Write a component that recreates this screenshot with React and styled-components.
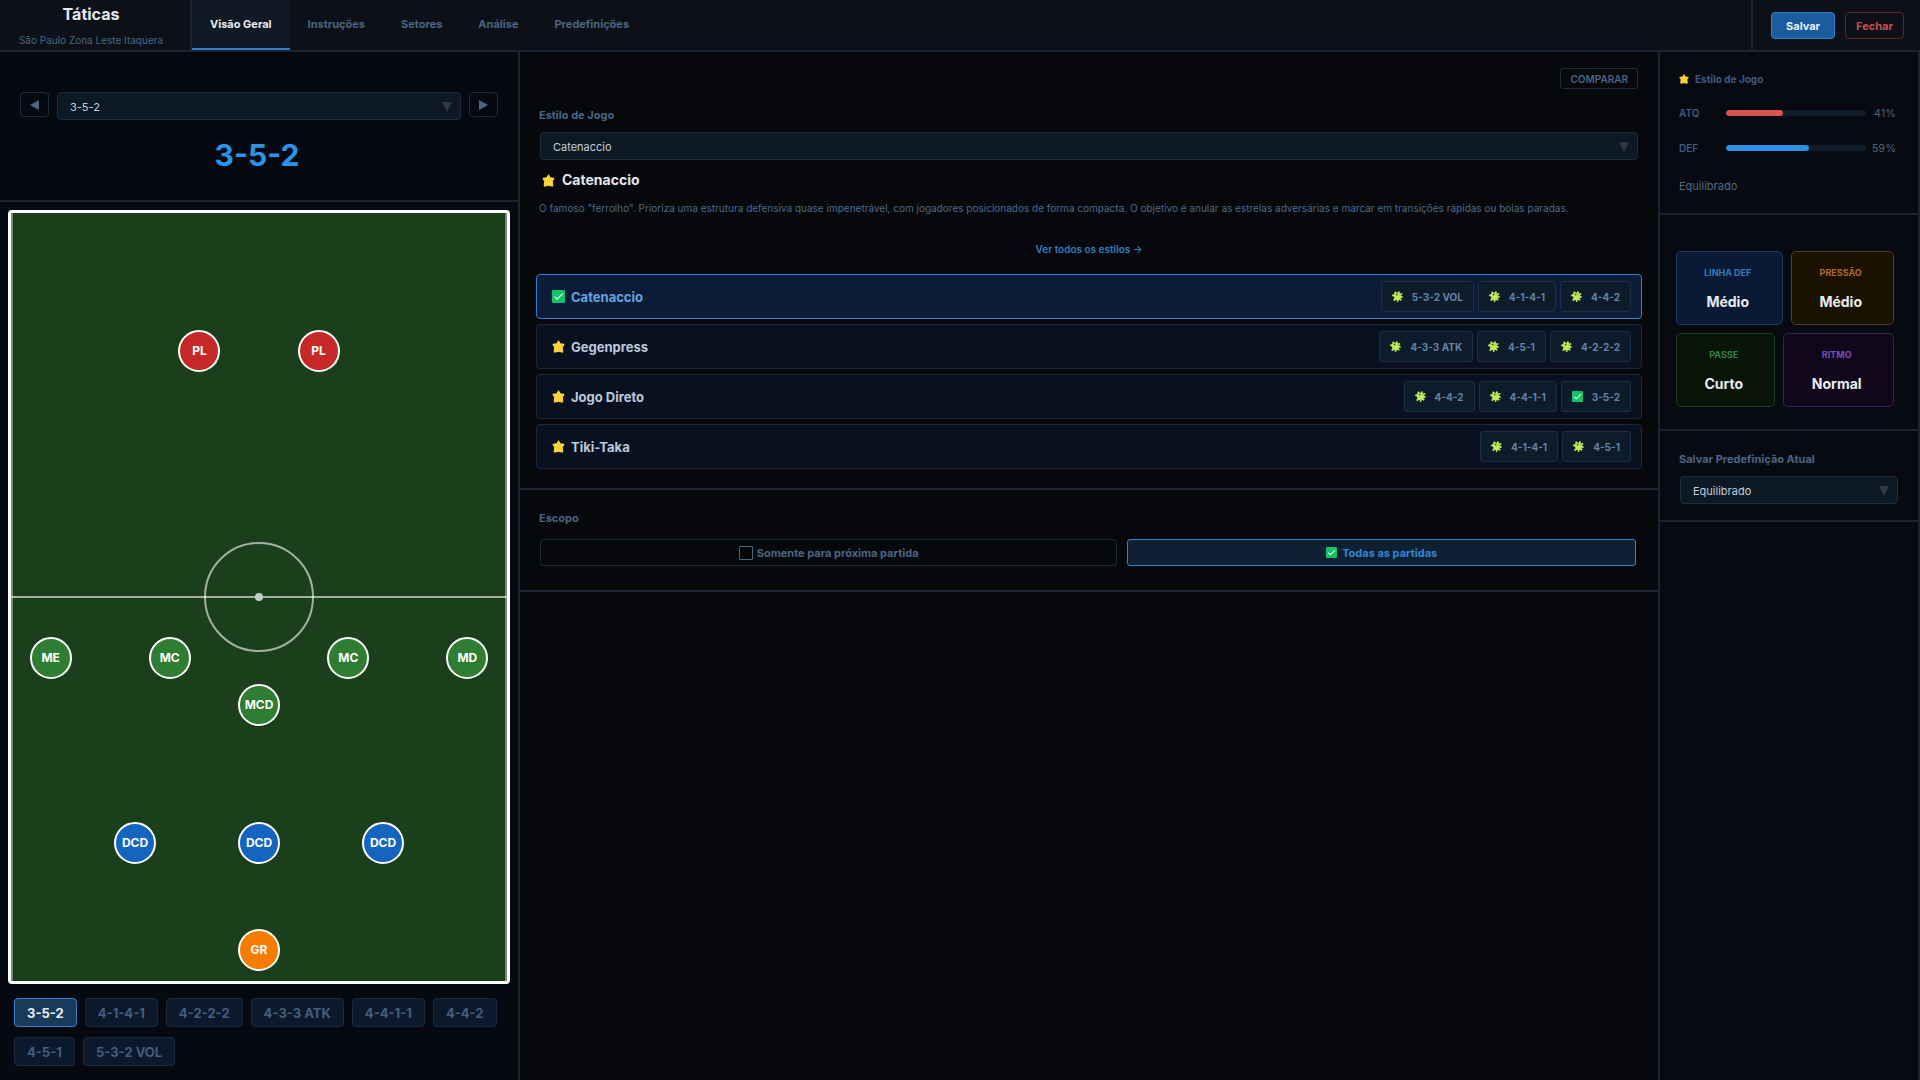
import React, { useState } from "react";
import styled, { createGlobalStyle, css } from "styled-components";

const GlobalStyle = createGlobalStyle`
  *, *::before, *::after { box-sizing: border-box; }
  body {
    margin: 0;
    background: #06080b;
    color: #e2e8f0;
    font-family: Inter, "Liberation Sans", sans-serif;
    font-size: 11px;
    line-height: 16px;
  }
  button, select { font-family: inherit; margin: 0; }
  button { cursor: pointer; }
  h1, h2, h3, p { margin: 0; }
`;

const line = "#1c2331";
const muted = "#4a6585";

const Page = styled.div`
  min-height: 100vh;
  display: flex;
  flex-direction: column;
`;

const Header = styled.header`
  display: flex;
  align-items: stretch;
  height: 52px;
  background: #0d1117;
  border-bottom: 2px solid ${line};
`;

const Brand = styled.div`
  width: 192px;
  padding: 4px 8px 0 0;
  border-right: 2px solid ${line};
  display: flex;
  flex-direction: column;
  gap: 8px;
  text-align: center;
`;

const BrandTitle = styled.h1`
  font-size: 16px;
  line-height: 20px;
  font-weight: 700;
`;

const BrandTeam = styled.p`
  font-size: 10px;
  line-height: 16px;
  color: ${muted};
`;

const Tabs = styled.nav`
  display: flex;
  flex: 1;
`;

const Tab = styled.button`
  padding: 0 18px;
  border: 0;
  border-bottom: 2px solid ${(p) => (p.$active ? "#3182ce" : "transparent")};
  background: ${(p) => (p.$active ? "#0f1923" : "transparent")};
  color: ${(p) => (p.$active ? "#e8edf4" : muted)};
  font-size: 11px;
  font-weight: 700;
`;

const Actions = styled.div`
  display: flex;
  align-items: center;
  gap: 10px;
  padding: 1px 16px 0 18px;
  border-left: 2px solid ${line};
`;

const ActionButton = styled.button`
  height: 27px;
  padding: 0 ${(p) => (p.$primary ? 14 : 10)}px;
  border-radius: 4px;
  border: 1px solid ${(p) => (p.$primary ? "#3182ce" : "#5a2529")};
  background: ${(p) => (p.$primary ? "#1a5c9e" : "transparent")};
  color: ${(p) => (p.$primary ? "#e8f1fa" : "#c84f50")};
  font-size: 11px;
  font-weight: 700;
`;

const Body = styled.div`
  flex: 1;
  display: grid;
  grid-template-columns: 520px minmax(0, 1fr) 262px;
`;

const FormationPanel = styled.aside`
  display: flex;
  flex-direction: column;
  background: #060a10;
  border-right: 2px solid ${line};
`;

const FormationHead = styled.section`
  padding: 40px 20px 25px;
  border-bottom: 2px solid ${line};
`;

const Picker = styled.div`
  display: flex;
  align-items: flex-start;
  gap: 8px;
`;

const StepButton = styled.button`
  width: 29px;
  height: 25px;
  padding: 0;
  display: grid;
  place-items: center;
  border: 1px solid #1e2d3d;
  border-radius: 4px;
  background: transparent;
  color: #4a6787;
`;

const FormationName = styled.h2`
  margin-top: 15px;
  padding-right: 4px;
  text-align: center;
  color: #2b93e8;
  font-size: 30px;
  line-height: 40px;
  font-weight: 700;
`;

const SelectBox = styled.div`
  position: relative;
  flex: 1;
  display: flex;
`;

const SelectInput = styled.select`
  flex: 1;
  height: 28px;
  padding: 1px 30px 0 12px;
  appearance: none;
  border: 1px solid #1e2d3d;
  border-radius: 4px;
  background: #0d1825;
  color: #c3cfdf;
  font-size: 11px;
`;

const SelectArrow = styled.svg`
  position: absolute;
  right: 9px;
  top: 50%;
  margin-top: -4px;
  pointer-events: none;
`;

const Pitch = styled.div`
  position: relative;
  flex: 1;
  min-height: 480px;
  margin: 8px 8px 14px;
  border: 3px solid #fff;
  border-radius: 4px;
  background: #1b3e1b;
  overflow: hidden;
`;

const Touchlines = styled.div`
  position: absolute;
  inset: 0;
  border: solid rgba(255, 255, 255, 0.4);
  border-width: 0 2px;
`;

const HalfwayLine = styled.div`
  position: absolute;
  left: 0;
  right: 0;
  top: 50%;
  height: 2px;
  margin-top: -1px;
  background: rgba(255, 255, 255, 0.6);
`;

const CentreCircle = styled.div`
  position: absolute;
  left: 50%;
  top: 50%;
  width: 110px;
  height: 110px;
  margin: -55px 0 0 -55px;
  border: 2px solid rgba(255, 255, 255, 0.6);
  border-radius: 50%;
`;

const CentreSpot = styled.div`
  position: absolute;
  left: 50%;
  top: 50%;
  width: 8px;
  height: 8px;
  margin: -4px 0 0 -4px;
  border-radius: 50%;
  background: #c3cdc3;
`;

const lineColours = {
  attack: "#c62828",
  midfield: "#2e7d32",
  defence: "#1565c0",
  keeper: "#f57c00",
};

const Player = styled.div`
  position: absolute;
  left: ${(p) => p.$x}%;
  top: ${(p) => p.$y}%;
  width: 42px;
  height: 42px;
  margin: -21px 0 0 -21px;
  display: grid;
  place-items: center;
  border: 2px solid #fff;
  border-radius: 50%;
  background: ${(p) => lineColours[p.$line]};
  color: #fff;
  font-size: 12px;
  font-weight: 700;
`;

const FormationList = styled.div`
  display: flex;
  flex-wrap: wrap;
  gap: 10px 8px;
  padding: 0 14px 14px;
`;

const FormationButton = styled.button`
  height: 29px;
  padding: 0 12px;
  border-radius: 4px;
  border: 1px solid ${(p) => (p.$active ? "#3182ce" : "#1a2a3e")};
  background: ${(p) => (p.$active ? "#1a3a5c" : "#0c192c")};
  color: ${(p) => (p.$active ? "#e8edf4" : "#435e7e")};
  font-size: 13px;
  font-weight: 700;
`;

const Main = styled.main`
  min-width: 0;
`;

const StyleSection = styled.section`
  padding: 16px 16px 19px;
  border-bottom: 2px solid ${line};
`;

const CompareRow = styled.div`
  display: flex;
  justify-content: flex-end;
  padding-right: 4px;
`;

const CompareButton = styled.button`
  height: 21px;
  padding: 0 9px;
  border: 1px solid #1e2d3d;
  border-radius: 3px;
  background: transparent;
  color: ${muted};
  font-size: 10px;
  font-weight: 600;
`;

const FieldLabel = styled.label`
  display: block;
  padding-left: 3px;
  color: ${muted};
  font-size: 11px;
  line-height: 16px;
  font-weight: 700;
`;

const StyleField = styled.div`
  margin-top: 18px;
  display: grid;
  gap: 9px;
`;

const StyleSelectWrap = styled.div`
  display: flex;
  padding: 0 4px;
`;

const StyleTitle = styled.h2`
  display: flex;
  align-items: center;
  gap: 7px;
  margin-top: 10px;
  padding-left: 6px;
  font-size: 14px;
  line-height: 20px;
  font-weight: 700;
`;

const Description = styled.p`
  margin-top: 10px;
  padding: 0 3px;
  color: #4d6a8b;
  font-size: 10px;
  line-height: 16px;
  font-weight: 400;
`;

const AllStyles = styled.a`
  display: block;
  width: fit-content;
  margin: 25px auto 17px;
  color: #2f7fc4;
  font-size: 10px;
  line-height: 16px;
  font-weight: 600;
  text-decoration: none;
`;

const StyleList = styled.ul`
  display: grid;
  gap: 5px;
  margin: 0;
  padding: 0;
  list-style: none;
`;

const StyleRow = styled.li`
  display: flex;
  align-items: center;
  justify-content: space-between;
  height: 45px;
  padding: 0 10px 0 15px;
  border-radius: 4px;
  border: 1px solid #1c2838;
  background: #091120;
  color: #bccadc;
  ${(p) =>
    p.$active &&
    css`
      border-color: #3182ce;
      background: #0c1c38;
      color: #64a5e0;
    `}
`;

const StyleName = styled.h3`
  display: flex;
  align-items: center;
  gap: 6px;
  font-size: 13px;
  font-weight: 700;
`;

const TagList = styled.div`
  display: flex;
  gap: 4px;
`;

const Tag = styled.button`
  display: flex;
  align-items: center;
  gap: 9px;
  height: 31px;
  padding: 0 10px;
  border: 1px solid #1a2f45;
  border-radius: 3px;
  background: #0d1b2a;
  color: #6284a8;
  font-size: 10px;
  font-weight: 700;
`;

const ScopeSection = styled.section`
  padding: 20px 16px 24px;
  border-bottom: 2px solid ${line};
`;

const ScopeOptions = styled.div`
  display: flex;
  gap: 10px;
  margin-top: 13px;
  padding: 0 6px 0 4px;
`;

const ScopeButton = styled.button`
  flex: 1 1 auto;
  display: flex;
  align-items: center;
  justify-content: center;
  gap: ${(p) => (p.$active ? 5 : 4)}px;
  height: 27px;
  border-radius: 3px;
  border: 1px solid ${(p) => (p.$active ? "#3182ce" : "#1e2836")};
  background: ${(p) => (p.$active ? "#0f2033" : "transparent")};
  color: ${(p) => (p.$active ? "#2f87d3" : muted)};
  font-size: 11px;
  font-weight: 700;
`;

const EmptyBox = styled.span`
  width: 14px;
  height: 14px;
  border: 1px solid #4a6787;
  border-radius: 1px;
`;

const SidePanel = styled.aside`
  background: #070b11;
  border: solid ${line};
  border-width: 0 2px;
`;

const SideSection = styled.section`
  padding: ${(p) => p.$pad};
  border-bottom: 2px solid ${line};
`;

const SideTitle = styled.h2`
  display: flex;
  align-items: center;
  gap: 6px;
  color: #3a5b85;
  font-size: 10px;
  line-height: 14px;
  font-weight: 700;
`;

const Meter = styled.div`
  display: grid;
  grid-template-columns: 47px 140px 1fr;
  align-items: center;
  margin-top: 19px;
  color: #3c5c84;
  font-size: 10px;
  line-height: 16px;
  font-weight: 600;
`;

const Track = styled.div`
  height: 6px;
  border-radius: 3px;
  background: #111c2b;
  overflow: hidden;
`;

const Fill = styled.div`
  height: 100%;
  border-radius: 3px;
  background: ${(p) => p.$colour};
`;

const Percent = styled.span`
  color: #4d6279;
  font-size: 11px;
  font-weight: 400;
  text-align: right;
`;

const Balance = styled.p`
  margin-top: 22px;
  color: #536a83;
  font-size: 11px;
`;

const Cards = styled.div`
  display: grid;
  gap: 8px;
`;

const CardRow = styled.div`
  display: flex;
  gap: 8px;
`;

const tones = {
  blue: ["#0a1a35", "#1d3f68", "#3479bb"],
  orange: ["#1b1100", "#54401c", "#b2682f"],
  green: ["#071407", "#1c3c22", "#2f8340"],
  purple: ["#10071a", "#36215a", "#7a4fb5"],
};

const Card = styled.div`
  flex: 1 1 auto;
  height: 74px;
  padding: 13px 4px 0 0;
  border: 1px solid ${(p) => tones[p.$tone][1]};
  border-radius: 5px;
  background: ${(p) => tones[p.$tone][0]};
  text-align: center;
`;

const CardLabel = styled.div`
  color: ${(p) => tones[p.$tone][2]};
  font-size: 9px;
  line-height: 16px;
  font-weight: 700;
`;

const CardValue = styled.div`
  margin-top: 11px;
  color: #e8edf4;
  font-size: 14px;
  line-height: 20px;
  font-weight: 700;
`;

const PresetField = styled.div`
  display: grid;
  gap: 9px;
`;

const PresetSelectWrap = styled.div`
  display: flex;
  padding-left: 4px;
`;

function Star({ size = 12 }) {
  return (
    <svg width={size} height={size} viewBox="0 0 12 12" aria-hidden="true">
      <path
        d="M6 .6 7.5 3.4 11.2 4 9.6 6.8 10 11.2 6 10.6 2 11.2 2.4 6.8.8 4 4.5 3.4Z"
        fill="#ffd43b"
        stroke="#ffd43b"
        strokeWidth=".9"
        strokeLinejoin="round"
      />
    </svg>
  );
}

function CheckMark({ size = 13 }) {
  return (
    <svg width={size} height={size} viewBox="0 0 13 13" aria-hidden="true">
      <rect width="13" height="13" rx="1.2" fill="#12c26b" />
      <path d="M2.6 6.6 5.2 9.2 10.6 3.6" fill="none" stroke="#d8ffe8" strokeWidth="1.2" />
    </svg>
  );
}

function Puzzle() {
  return (
    <svg width="11" height="11" viewBox="0 0 11 11" aria-hidden="true">
      <g fill="#bfee5a">
        <circle cx="5.4" cy="5.6" r="3.4" />
        <circle cx="3.4" cy="1.7" r="1.1" />
        <circle cx="6.9" cy="1.3" r="1" />
        <circle cx="9.3" cy="3" r="1.1" />
        <circle cx="9.8" cy="6" r="1" />
        <circle cx="8.5" cy="8.6" r="1.1" />
        <circle cx="5.6" cy="9.9" r="1" />
        <circle cx="2.5" cy="8.9" r="1.1" />
        <circle cx="1.2" cy="4.4" r="1.1" />
        <path d="M3 1.5 6.8 1.4 9.2 3.2 9.3 6 8.4 8.4 5.6 9.4 2.8 8.6 2.4 6.6 1.4 4.6Z" />
      </g>
      <circle cx="4.6" cy="3.6" r=".9" fill="#35502c" />
      <path d="M5.3 .5V2.2M8.2 3.4 7.4 4.2M.8 6.6 2.4 6.4M8.6 7.2 9.8 7.4M4 10.4 4.2 9" stroke="#0d1b2a" strokeWidth=".6" />
    </svg>
  );
}

function Select({ id, label, value, onChange, options }) {
  return (
    <SelectBox>
      <SelectInput id={id} aria-label={label} value={value} onChange={(e) => onChange(e.target.value)}>
        {options.map((o) => (
          <option key={o}>{o}</option>
        ))}
      </SelectInput>
      <SelectArrow width="10" height="10" viewBox="0 0 10 10" aria-hidden="true">
        <path d="M0 0H10L5 10Z" fill="#34373b" />
      </SelectArrow>
    </SelectBox>
  );
}

const tabs = ["Visão Geral", "Instruções", "Setores", "Análise", "Predefinições"];

const formations = ["3-5-2", "4-1-4-1", "4-2-2-2", "4-3-3 ATK", "4-4-1-1", "4-4-2", "4-5-1", "5-3-2 VOL"];

const players = [
  ["PL", 38, 18, "attack"],
  ["PL", 62, 18, "attack"],
  ["ME", 8, 58, "midfield"],
  ["MC", 32, 58, "midfield"],
  ["MC", 68, 58, "midfield"],
  ["MD", 92, 58, "midfield"],
  ["MCD", 50, 64, "midfield"],
  ["DCD", 25, 82, "defence"],
  ["DCD", 50, 82, "defence"],
  ["DCD", 75, 82, "defence"],
  ["GR", 50, 96, "keeper"],
];

const styles = [
  { name: "Catenaccio", tags: ["5-3-2 VOL", "4-1-4-1", "4-4-2"] },
  { name: "Gegenpress", tags: ["4-3-3 ATK", "4-5-1", "4-2-2-2"] },
  { name: "Jogo Direto", tags: ["4-4-2", "4-4-1-1", "3-5-2"] },
  { name: "Tiki-Taka", tags: ["4-1-4-1", "4-5-1"] },
];

const meters = [
  { label: "ATQ", value: 41, colour: "#d9534f" },
  { label: "DEF", value: 59, colour: "#2b90e6" },
];

const cardRows = [
  [
    { label: "LINHA DEF", value: "Médio", tone: "blue" },
    { label: "PRESSÃO", value: "Médio", tone: "orange" },
  ],
  [
    { label: "PASSE", value: "Curto", tone: "green" },
    { label: "RITMO", value: "Normal", tone: "purple" },
  ],
];

export default function App() {
  const [tab, setTab] = useState("Visão Geral");
  const [formation, setFormation] = useState("3-5-2");
  const [style, setStyle] = useState("Catenaccio");
  const [preset, setPreset] = useState("Equilibrado");
  const [nextOnly, setNextOnly] = useState(false);

  const step = (delta) => {
    const i = formations.indexOf(formation);
    setFormation(formations[(i + delta + formations.length) % formations.length]);
  };

  return (
    <Page>
      <GlobalStyle />
      <Header>
        <Brand>
          <BrandTitle>Táticas</BrandTitle>
          <BrandTeam>São Paulo Zona Leste Itaquera</BrandTeam>
        </Brand>
        <Tabs>
          {tabs.map((t) => (
            <Tab key={t} $active={t === tab} onClick={() => setTab(t)}>
              {t}
            </Tab>
          ))}
        </Tabs>
        <Actions>
          <ActionButton $primary>Salvar</ActionButton>
          <ActionButton>Fechar</ActionButton>
        </Actions>
      </Header>
      <Body>
        <FormationPanel>
          <FormationHead>
            <Picker>
              <StepButton aria-label="Formação anterior" onClick={() => step(-1)}>
                <svg width="9" height="10" viewBox="0 0 9 10"><path d="M9 0V10L0 5Z" fill="currentColor" /></svg>
              </StepButton>
              <Select label="Formação" value={formation} onChange={setFormation} options={formations} />
              <StepButton aria-label="Próxima formação" onClick={() => step(1)}>
                <svg width="9" height="10" viewBox="0 0 9 10"><path d="M0 0V10L9 5Z" fill="currentColor" /></svg>
              </StepButton>
            </Picker>
            <FormationName>{formation}</FormationName>
          </FormationHead>
          <Pitch>
            <Touchlines />
            <HalfwayLine />
            <CentreCircle />
            <CentreSpot />
            {players.map(([role, x, y, group], i) => (
              <Player key={i} $x={x} $y={y} $line={group}>
                {role}
              </Player>
            ))}
          </Pitch>
          <FormationList>
            {formations.map((f) => (
              <FormationButton key={f} $active={f === formation} onClick={() => setFormation(f)}>
                {f}
              </FormationButton>
            ))}
          </FormationList>
        </FormationPanel>
        <Main>
          <StyleSection>
            <CompareRow>
              <CompareButton>COMPARAR</CompareButton>
            </CompareRow>
            <StyleField>
              <FieldLabel htmlFor="style">Estilo de Jogo</FieldLabel>
              <StyleSelectWrap>
                <Select id="style" value={style} onChange={setStyle} options={styles.map((s) => s.name)} />
              </StyleSelectWrap>
            </StyleField>
            <StyleTitle>
              <Star size={13} />
              {style}
            </StyleTitle>
            <Description>
              O famoso "ferrolho". Prioriza uma estrutura defensiva quase impenetrável, com jogadores posicionados de
              forma compacta. O objetivo é anular as estrelas adversárias e marcar em transições rápidas ou bolas
              paradas.
            </Description>
            <AllStyles href="#estilos">Ver todos os estilos →</AllStyles>
            <StyleList>
              {styles.map((s) => (
                <StyleRow key={s.name} $active={s.name === style}>
                  <StyleName>
                    {s.name === style ? <CheckMark /> : <Star size={13} />}
                    {s.name}
                  </StyleName>
                  <TagList>
                    {s.tags.map((t) => (
                      <Tag key={t} onClick={() => setFormation(t)}>
                        {t === formation ? <CheckMark size={11} /> : <Puzzle />}
                        {t}
                      </Tag>
                    ))}
                  </TagList>
                </StyleRow>
              ))}
            </StyleList>
          </StyleSection>
          <ScopeSection>
            <FieldLabel as="h2">Escopo</FieldLabel>
            <ScopeOptions>
              <ScopeButton $active={nextOnly} onClick={() => setNextOnly(true)}>
                {nextOnly ? <CheckMark size={11} /> : <EmptyBox />}
                Somente para próxima partida
              </ScopeButton>
              <ScopeButton $active={!nextOnly} onClick={() => setNextOnly(false)}>
                {nextOnly ? <EmptyBox /> : <CheckMark size={11} />}
                Todas as partidas
              </ScopeButton>
            </ScopeOptions>
          </ScopeSection>
        </Main>
        <SidePanel>
          <SideSection $pad="20px 22px 19px 19px">
            <SideTitle>
              <Star size={10} />
              Estilo de Jogo
            </SideTitle>
            {meters.map((m) => (
              <Meter key={m.label}>
                {m.label}
                <Track>
                  <Fill $colour={m.colour} style={{ width: `${m.value}%` }} />
                </Track>
                <Percent>{m.value}%</Percent>
              </Meter>
            ))}
            <Balance>Equilibrado</Balance>
          </SideSection>
          <SideSection $pad="36px 24px 22px 16px">
            <Cards>
              {cardRows.map((row, i) => (
                <CardRow key={i}>
                  {row.map((c) => (
                    <Card key={c.label} $tone={c.tone}>
                      <CardLabel $tone={c.tone}>{c.label}</CardLabel>
                      <CardValue>{c.value}</CardValue>
                    </Card>
                  ))}
                </CardRow>
              ))}
            </Cards>
          </SideSection>
          <SideSection $pad="20px 20px 16px 16px">
            <PresetField>
              <FieldLabel htmlFor="preset">Salvar Predefinição Atual</FieldLabel>
              <PresetSelectWrap>
                <Select
                  id="preset"
                  value={preset}
                  onChange={setPreset}
                  options={["Equilibrado", "Ofensivo", "Defensivo"]}
                />
              </PresetSelectWrap>
            </PresetField>
          </SideSection>
        </SidePanel>
      </Body>
    </Page>
  );
}
